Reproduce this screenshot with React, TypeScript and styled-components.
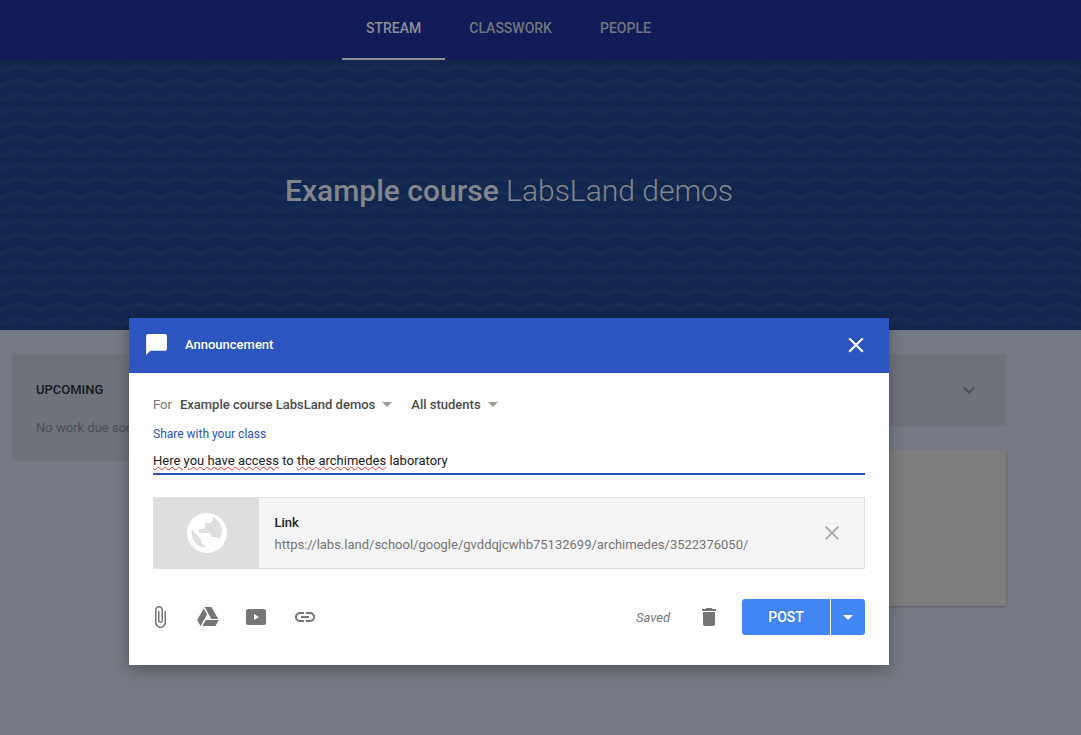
import React from 'react';
import styled, { createGlobalStyle } from 'styled-components';

const GlobalStyle = createGlobalStyle`
  html, body {
    margin: 0;
    padding: 0;
    height: 100%;
    overflow: hidden;
  }

  body {
    background-color: #747983;
    font-family: Roboto, "Liberation Sans", sans-serif;
  }
`;

const chevrons = encodeURIComponent(
  `<svg xmlns="http://www.w3.org/2000/svg" width="80" height="14"><path d="M0 -2 L20 -8 L40 -2 L60 -8 L80 -2 M0 12 L20 6 L40 12 L60 6 L80 12 M0 26 L20 20 L40 26 L60 20 L80 26" fill="none" stroke="#ffffff" stroke-opacity="0.022" stroke-width="4" stroke-linejoin="miter"/><path d="M40 0 V14" stroke="#000000" stroke-opacity="0.04"/></svg>`
);

const Page = styled.div`
  position: relative;
  width: 1081px;
  height: 735px;
  overflow: hidden;
  background-color: #747983;
`;

const Nav = styled.nav`
  display: flex;
  height: 60px;
  padding-left: 342px;
  background-color: #111c58;
`;

const Tab = styled.div<{ $active?: boolean }>`
  display: flex;
  align-items: center;
  box-sizing: border-box;
  height: 60px;
  padding: 0 24px 2px;
  border-bottom: 2px solid ${({ $active }) => ($active ? '#8f8f8f' : 'transparent')};
  color: ${({ $active }) => ($active ? '#8f9096' : '#73757f')};
  font-size: 14px;
  font-weight: 500;
`;

const Hero = styled.header`
  display: flex;
  align-items: center;
  justify-content: center;
  height: 270px;
  padding: 0 63px 10px 0;
  box-sizing: border-box;
  background-color: #12274f;
  background-image: url("data:image/svg+xml,${chevrons}");
`;

const Title = styled.h1`
  margin: 0;
  color: #82858c;
  font-size: 30px;
  font-weight: 300;

  strong {
    font-weight: 500;
  }
`;

const Content = styled.main`
  display: grid;
  grid-template-columns: 220px 1fr;
  gap: 24px;
  padding: 24px 75px 0 12px;
`;

const Side = styled.section`
  box-sizing: border-box;
  height: 107px;
  padding: 27px 24px;
  background-color: #6e727a;
`;

const SideTitle = styled.div`
  color: #17181a;
  font-size: 13px;
  font-weight: 500;
  line-height: 18px;
`;

const SideText = styled.div`
  margin-top: 20px;
  color: #4b4d52;
  font-size: 13px;
  line-height: 18px;
  white-space: nowrap;
`;

const Feed = styled.div`
  display: flex;
  flex-direction: column;
  gap: 24px;
`;

const FeedBar = styled.div`
  display: flex;
  align-items: center;
  justify-content: flex-end;
  height: 72px;
  padding-right: 25px;
  background-color: #6e727a;
  color: #4f5157;
`;

const Card = styled.div`
  height: 156px;
  background-color: #7d7d7d;
  box-shadow: 0 1px 2px rgba(0, 0, 0, 0.25);
`;

const Modal = styled.div`
  position: absolute;
  left: 129px;
  top: 318px;
  width: 760px;
  height: 347px;
  background-color: #ffffff;
  box-shadow: 0 4px 14px rgba(0, 0, 0, 0.3);
`;

const ModalHeader = styled.div`
  display: flex;
  align-items: center;
  height: 55px;
  padding: 0 20px 2px 15px;
  box-sizing: border-box;
  background-color: #2c55c0;
  color: #ffffff;
`;

const ModalTitle = styled.div`
  flex: 1;
  margin-left: 16px;
  font-size: 13px;
  font-weight: 500;
`;

const ModalBody = styled.div`
  padding: 21px 24px 0;
`;

const ForRow = styled.div`
  display: flex;
  align-items: center;
  height: 20px;
  color: #5f6368;
  font-size: 13px;
`;

const ForLabel = styled.span`
  margin-right: 8px;
  color: #757575;
`;

const Select = styled.span`
  display: flex;
  align-items: center;
  margin-right: 19px;
  color: #4a4a4a;
  font-weight: 500;

  &::after {
    content: '';
    margin-left: 7px;
    border-left: 5px solid transparent;
    border-right: 5px solid transparent;
    border-top: 5px solid #9e9e9e;
  }
`;

const FieldLabel = styled.div`
  margin-top: 12px;
  color: #2c55c0;
  font-size: 12px;
  line-height: 16px;
`;

const Field = styled.div`
  box-sizing: border-box;
  height: 33px;
  padding-top: 11px;
  border-bottom: 2px solid #2c55c0;
  color: #212121;
  font-size: 13px;
  line-height: 16px;
`;

const Misspelled = styled.span`
  text-decoration: underline wavy #e0342c 1px;
  text-underline-offset: 1px;
`;

const Attachment = styled.div`
  display: flex;
  box-sizing: border-box;
  height: 72px;
  margin-top: 22px;
  border: 1px solid #e0e0e0;
  background-color: #f4f4f4;
`;

const Thumb = styled.div`
  display: flex;
  flex: 0 0 105px;
  align-items: center;
  justify-content: center;
  background-color: #dedede;
  color: #ffffff;
`;

const AttachmentInfo = styled.div`
  flex: 1;
  padding: 16px 15.5px 0;
`;

const AttachmentTitle = styled.div`
  color: #212121;
  font-size: 13px;
  font-weight: 500;
  line-height: 18px;
`;

const AttachmentUrl = styled.div`
  margin-top: 4px;
  color: #757575;
  font-size: 13px;
  line-height: 18px;
`;

const RemoveButton = styled.div`
  display: flex;
  align-items: center;
  padding-right: 20.5px;
  color: #aeaeae;
`;

const Footer = styled.div`
  display: flex;
  align-items: center;
  height: 36px;
  margin-top: 30px;
  color: #757575;
`;

const Tools = styled.div`
  display: flex;
  flex: 1;
  align-items: center;
  gap: 24.2px;
  margin-left: -5px;
`;

const Saved = styled.span`
  margin-right: 27px;
  font-size: 13px;
  font-style: italic;
`;

const TrashButton = styled.div`
  display: flex;
  margin-right: 21px;
`;

const SplitButton = styled.div`
  display: flex;
  overflow: hidden;
  height: 36px;
  border-radius: 3px;
  background-color: #4285f4;
  color: #ffffff;
`;

const PostButton = styled.div`
  display: flex;
  align-items: center;
  justify-content: center;
  width: 88px;
  border-right: 1px solid #ffffff;
  font-size: 14px;
  font-weight: 500;
`;

const ArrowButton = styled.div`
  display: flex;
  align-items: center;
  justify-content: center;
  width: 34px;
  padding-right: 1px;
  box-sizing: border-box;

  &::after {
    content: '';
    border-left: 5px solid transparent;
    border-right: 5px solid transparent;
    border-top: 5px solid #ffffff;
  }
`;

const Icon: React.FC<{ d: string; size?: number }> = ({ d, size = 24 }) => (
  <svg width={size} height={size} viewBox="0 0 24 24" fill="currentColor" fillRule="evenodd">
    <path d={d} />
  </svg>
);

const icons = {
  chat: 'M20 2H4c-1.1 0-2 .9-2 2v18l4-4h14c1.1 0 2-.9 2-2V4c0-1.1-.9-2-2-2z',
  close:
    'M19 6.41L17.59 5 12 10.59 6.41 5 5 6.41 10.59 12 5 17.59 6.41 19 12 13.41 17.59 19 19 17.59 13.41 12z',
  chevron: 'M7.41 8.59L12 13.17l4.59-4.58L18 10l-6 6-6-6z',
  globe:
    'M12 2C6.48 2 2 6.48 2 12s4.48 10 10 10 10-4.48 10-10S17.52 2 12 2zm-1 17.4c-3.6-.6-6.6-3.7-6.8-7.4 0-.6 0-1.2.1-1.7L9 15v1c0 1.1.9 2 2 2v1.4zM15 5c0 1.1-.9 2-2 2h-2v2c0 .55-.45 1-1 1H8v2h5c.55 0 1 .45 1 1v1h2c.8 0 1.5.4 1.8 1 1-1 1.7-2.5 1.7-4 0-3-1.8-5.6-4.5-7z',
  attach:
    'M16.5 6v11.5c0 2.21-1.79 4-4 4s-4-1.79-4-4V5c0-1.38 1.12-2.5 2.5-2.5s2.5 1.12 2.5 2.5v10.5c0 .55-.45 1-1 1s-1-.45-1-1V6H10v9.5c0 1.38 1.12 2.5 2.5 2.5s2.5-1.12 2.5-2.5V5c0-2.21-1.79-4-4-4S7 2.79 7 5v12.5c0 3.04 2.46 5.5 5.5 5.5s5.5-2.46 5.5-5.5V6h-1.5z',
  drive:
    'M7.71 3.5L1.15 15l3.43 6 6.55-11.5zM9.73 15L6.3 21h13.12l3.43-6zM22.28 14L15.42 2H8.58l6.85 12z',
  youtube:
    'M4 4h16c1.1 0 2 .9 2 2v12c0 1.1-.9 2-2 2H4c-1.1 0-2-.9-2-2V6c0-1.1.9-2 2-2zm6 5v6l5-3z',
  link:
    'M3.9 12c0-1.71 1.39-3.1 3.1-3.1h4V7H7c-2.76 0-5 2.24-5 5s2.24 5 5 5h4v-1.9H7c-1.71 0-3.1-1.39-3.1-3.1zM8 13h8v-2H8v2zm9-6h-4v1.9h4c1.71 0 3.1 1.39 3.1 3.1s-1.39 3.1-3.1 3.1h-4V17h4c2.76 0 5-2.24 5-5s-2.24-5-5-5z',
  trash: 'M6 19c0 1.1.9 2 2 2h8c1.1 0 2-.9 2-2V7H6v12zM19 4h-3.5l-1-1h-5l-1 1H5v2h14V4z',
};

const App: React.FC = () => {
  return (
    <Page>
      <GlobalStyle />
      <Nav>
        <Tab $active>STREAM</Tab>
        <Tab>CLASSWORK</Tab>
        <Tab>PEOPLE</Tab>
      </Nav>
      <Hero>
        <Title>
          <strong>Example course</strong> LabsLand demos
        </Title>
      </Hero>
      <Content>
        <Side>
          <SideTitle>UPCOMING</SideTitle>
          <SideText>No work due soon</SideText>
        </Side>
        <Feed>
          <FeedBar>
            <Icon d={icons.chevron} />
          </FeedBar>
          <Card />
        </Feed>
      </Content>
      <Modal>
        <ModalHeader>
          <Icon d={icons.chat} size={25} />
          <ModalTitle>Announcement</ModalTitle>
          <Icon d={icons.close} size={26} />
        </ModalHeader>
        <ModalBody>
          <ForRow>
            <ForLabel>For</ForLabel>
            <Select>Example course LabsLand demos</Select>
            <Select>All students</Select>
          </ForRow>
          <FieldLabel>Share with your class</FieldLabel>
          <Field>
            <Misspelled>Here you have access</Misspelled> to <Misspelled>the archimedes</Misspelled> laboratory
          </Field>
          <Attachment>
            <Thumb>
              <Icon d={icons.globe} size={48} />
            </Thumb>
            <AttachmentInfo>
              <AttachmentTitle>Link</AttachmentTitle>
              <AttachmentUrl>https://labs.land/school/google/gvddqjcwhb75132699/archimedes/3522376050/</AttachmentUrl>
            </AttachmentInfo>
            <RemoveButton>
              <Icon d={icons.close} />
            </RemoveButton>
          </Attachment>
          <Footer>
            <Tools>
              <Icon d={icons.attach} />
              <Icon d={icons.drive} />
              <Icon d={icons.youtube} />
              <Icon d={icons.link} />
            </Tools>
            <Saved>Saved</Saved>
            <TrashButton>
              <Icon d={icons.trash} />
            </TrashButton>
            <SplitButton>
              <PostButton>POST</PostButton>
              <ArrowButton />
            </SplitButton>
          </Footer>
        </ModalBody>
      </Modal>
    </Page>
  );
};

export default App;
